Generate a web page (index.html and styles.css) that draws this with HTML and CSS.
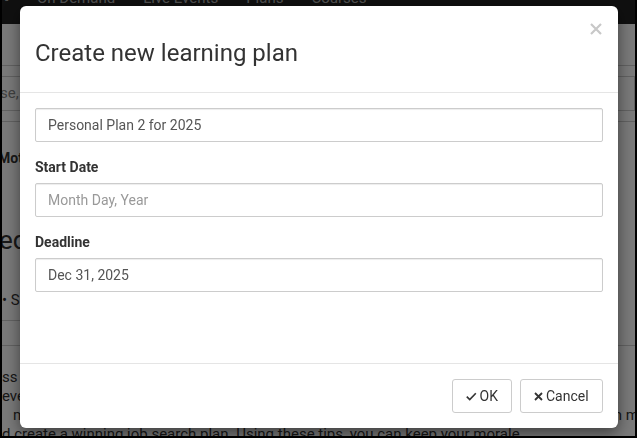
FILE: index.html
```html
<!DOCTYPE html>
<html lang="en">
<head>
<meta charset="utf-8">
<title>Create new learning plan</title>
<link rel="stylesheet" href="styles.css">
</head>
<body>
<div class="screen">
  <div class="page">
    <nav class="navbar">
      <span class="nav-dash">-</span>
      <span class="nav-links">
        <a class="nav-link">On Demand</a>
        <a class="nav-link">Live Events</a>
        <a class="nav-link">Plans</a>
        <a class="nav-link">Courses</a>
      </span>
    </nav>
    <div class="subhead"></div>
    <div class="search"><span class="search-text">se,</span></div>
    <div class="rule"></div>
    <div class="mot">Mot</div>
    <div class="ed">ed</div>
    <div class="bullet">• Sh</div>
    <div class="rule-left"></div>
    <div class="rule-full"></div>
    <div class="para">
      <div class="pline">ss</div>
      <div class="pline">eve</div>
      <div class="pline split"><span class="indent">mo</span><span class="tail">n m</span></div>
      <div class="pline">d create a winning job search plan. Using these tips, you can keep your morale</div>
    </div>
  </div>
  <div class="backdrop"></div>
  <div class="modal">
    <div class="modal-header">
      <h4 class="modal-title">Create new learning plan</h4>
      <span class="close" aria-label="Close">
        <svg width="12" height="12" viewBox="0 0 12 12"><path d="M1 1L11 11M11 1L1 11" stroke="#c8c8c8" stroke-width="2.2" fill="none"/></svg>
      </span>
    </div>
    <div class="modal-body">
      <div class="form-group">
        <div class="form-control">Personal Plan 2 for 2025</div>
      </div>
      <div class="form-group">
        <label class="label">Start Date</label>
        <div class="form-control placeholder">Month Day, Year</div>
      </div>
      <div class="form-group">
        <label class="label">Deadline</label>
        <div class="form-control">Dec 31, 2025</div>
      </div>
    </div>
    <div class="modal-footer">
      <button class="btn btn-ok">
        <svg width="11" height="9" viewBox="0 0 11 9"><path d="M0.8 4.6L3.9 7.7L10.2 1.1" stroke="#333" stroke-width="1.7" fill="none"/></svg>
        <span>OK</span>
      </button>
      <button class="btn btn-cancel">
        <svg width="9" height="9" viewBox="0 0 9 9"><path d="M1 1L8 8M8 1L1 8" stroke="#333" stroke-width="1.8" fill="none"/></svg>
        <span>Cancel</span>
      </button>
    </div>
  </div>
</div>
</body>
</html>
```

FILE: styles.css
```css
html, body {
  margin: 0;
  padding: 0;
  background: #000;
}

.screen {
  position: relative;
  width: 637px;
  height: 438px;
  box-sizing: border-box;
  border-style: solid;
  border-color: #000;
  border-width: 0 2px 2px 2px;
  overflow: hidden;
  font-family: Roboto, "Liberation Sans", Arial, sans-serif;
  background: #fff;
}

.page {
  color: #333;
  font-size: 15px;
}

.navbar {
  height: 24px;
  background: #222;
  display: flex;
  align-items: flex-start;
  overflow: hidden;
}

.nav-dash {
  color: #aaa;
  font-size: 12px;
  line-height: 12px;
  margin: -6px 0 0 3px;
  width: 32px;
}

.nav-links {
  display: flex;
  gap: 28px;
  margin-top: -12px;
}

.nav-link {
  color: #aaa;
  font-size: 15px;
  line-height: 20px;
}

.subhead {
  height: 41px;
  border-bottom: 1px solid #ccc;
}

.search {
  margin-top: 10px;
  height: 33px;
  border: 1px solid #ccc;
  border-left: none;
  line-height: 33px;
}

.search-text {
  color: #888;
  font-size: 15px;
  margin-left: -2px;
}

.rule {
  margin-top: 10px;
  border-top: 1px solid #ccc;
}

.mot {
  margin-top: 26px;
  font-weight: 700;
  font-size: 14px;
  line-height: 20px;
  margin-left: -4px;
}

.ed {
  margin-top: 57px;
  font-size: 26px;
  line-height: 30px;
  margin-left: -3px;
}

.bullet {
  margin-top: 35px;
  line-height: 20px;
  font-size: 15px;
}

.rule-left {
  margin-top: 10px;
  width: 300px;
  border-top: 1px solid #ccc;
}

.rule-full {
  margin-top: 24px;
  border-top: 1px solid #ccc;
}

.para {
  margin-top: 22px;
}

.pline {
  line-height: 19px;
  white-space: nowrap;
}

.split {
  display: flex;
  justify-content: space-between;
}

.indent {
  padding-left: 11px;
}

.tail {
  margin-right: -4px;
}

.backdrop {
  position: absolute;
  inset: 0;
  background: rgba(0, 0, 0, 0.52);
}

.modal {
  position: fixed;
  left: 20px;
  top: 6px;
  width: 598px;
  height: 422px;
  background: #fff;
  border-radius: 6px;
  box-shadow: 0 5px 15px rgba(0, 0, 0, 0.5);
  display: flex;
  flex-direction: column;
  color: #333;
  font-family: Roboto, "Liberation Sans", Arial, sans-serif;
}

.modal-header {
  position: relative;
  padding: 34px 15px 26px;
  border-bottom: 1px solid #e5e5e5;
}

.modal-title {
  margin: 0;
  font-size: 24px;
  line-height: 26px;
  font-weight: 400;
  color: #333;
}

.close {
  position: absolute;
  top: 17px;
  right: 16px;
  width: 12px;
  height: 12px;
  display: block;
}

.close svg {
  display: block;
}

.modal-body {
  height: 270px;
  box-sizing: border-box;
  padding: 15px;
}

.form-group {
  margin-bottom: 15px;
}

.label {
  display: block;
  font-size: 14px;
  font-weight: 700;
  line-height: 20px;
  margin-bottom: 6px;
  color: #333;
}

.form-control {
  height: 34px;
  box-sizing: border-box;
  border: 1px solid #ccc;
  border-radius: 2px;
  box-shadow: inset 0 1px 1px rgba(0, 0, 0, 0.075);
  padding: 0 12px;
  font-size: 14px;
  line-height: 32px;
  color: #555;
}

.placeholder {
  color: #999;
}

.modal-footer {
  height: 65px;
  box-sizing: border-box;
  border-top: 1px solid #e5e5e5;
  padding: 15px;
  display: flex;
  justify-content: flex-end;
  gap: 8px;
}

.btn {
  height: 34px;
  box-sizing: border-box;
  border: 1px solid #ccc;
  border-radius: 3px;
  background: #fff;
  color: #333;
  font-family: Roboto, "Liberation Sans", Arial, sans-serif;
  font-size: 14px;
  display: flex;
  align-items: center;
  margin: 0;
}

.btn-ok {
  padding: 0 13px;
  gap: 3px;
  width: 60px;
}

.btn-cancel {
  padding: 0 13px;
  gap: 3px;
  width: 83px;
}

.btn svg {
  display: block;
}
```
